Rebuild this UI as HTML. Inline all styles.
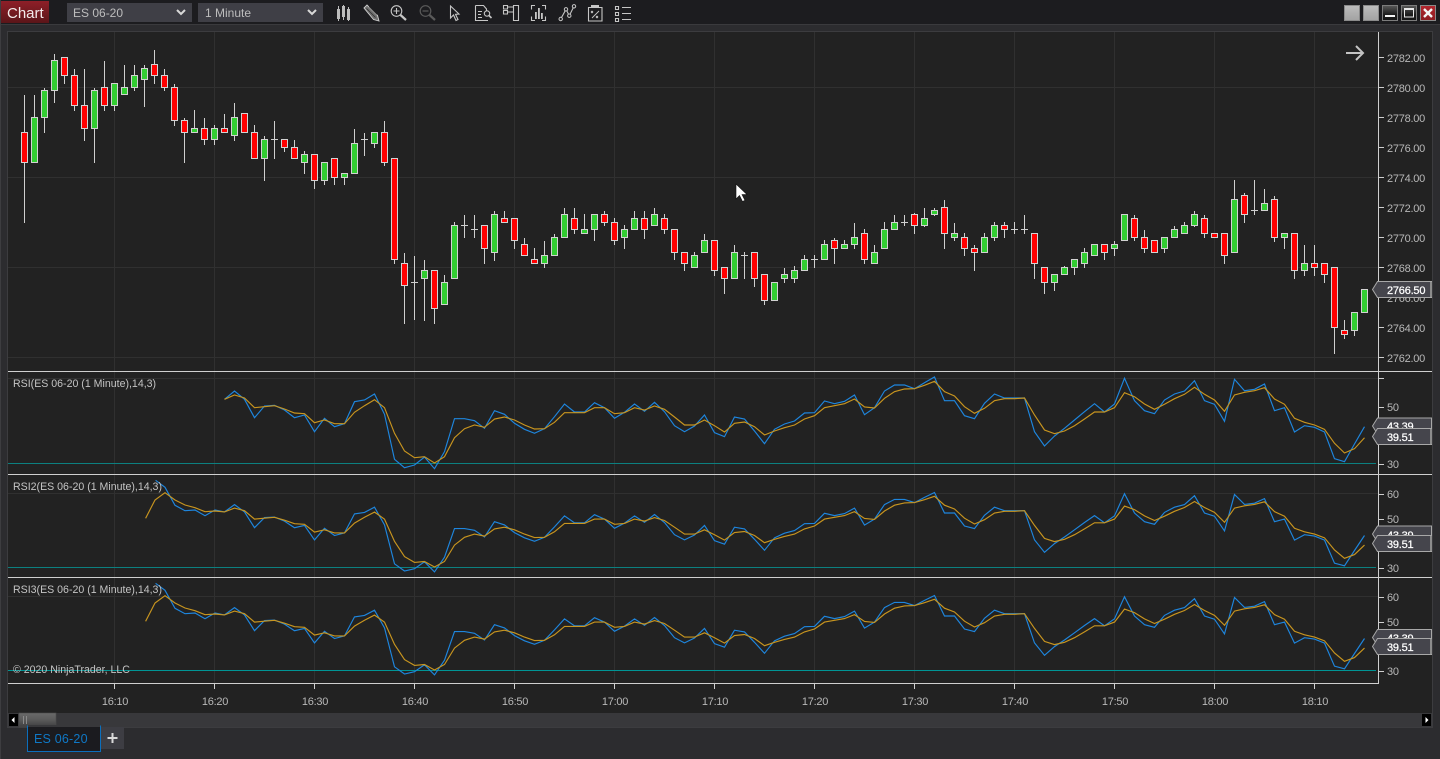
<!DOCTYPE html>
<html><head><meta charset="utf-8"><style>
html,body{margin:0;padding:0;background:#2c2c2f;width:1440px;height:759px;overflow:hidden}
svg{display:block}
text{font-family:"Liberation Sans",Arial,sans-serif}
.p{font-size:11px;fill:#b8b8b8;letter-spacing:-.25px}
.t{font-size:11px;fill:#b8b8b8;text-anchor:middle;letter-spacing:-.25px}
.l{font-size:10.6px;fill:#c4c4c4}
.w{font-size:11px;fill:#fff;stroke:#fff;stroke-width:.25;letter-spacing:-.22px}
.ic{fill:none;stroke:#c6c6c6;stroke-width:1.1}
</style></head><body>
<svg xmlns="http://www.w3.org/2000/svg" width="1440" height="759" viewBox="0 0 1440 759">
<defs>
<linearGradient id="rd" x1="0" y1="0" x2="0" y2="1"><stop offset="0" stop-color="#8e1f28"/><stop offset="1" stop-color="#5b1519"/></linearGradient>
<linearGradient id="gb" x1="0" y1="0" x2="0" y2="1"><stop offset="0" stop-color="#bdbdbd"/><stop offset="1" stop-color="#a2a2a2"/></linearGradient>
<linearGradient id="db" x1="0" y1="0" x2="0" y2="1"><stop offset="0" stop-color="#5a5a5a"/><stop offset=".6" stop-color="#1c1c1c"/><stop offset="1" stop-color="#151515"/></linearGradient>
<linearGradient id="th" x1="0" y1="0" x2="0" y2="1"><stop offset="0" stop-color="#6a6a6a"/><stop offset=".5" stop-color="#5a5a5a"/><stop offset="1" stop-color="#3e3e40"/></linearGradient>
<linearGradient id="xb" x1="0" y1="0" x2="0" y2="1"><stop offset="0" stop-color="#b3272e"/><stop offset="1" stop-color="#8b1a20"/></linearGradient>
</defs>

<!-- window -->
<rect width="1440" height="759" fill="#2c2c2f"/>
<rect x="0" y="0" width="1440" height="24" fill="#1c1c1f"/>
<rect x="0" y="24" width="1440" height="1" fill="#3a3a3d"/>
<rect x="0" y="0" width="1" height="759" fill="#3d3d40"/>
<rect x="1" y="1" width="48" height="22" fill="url(#rd)"/>
<text x="7" y="18" font-size="15" fill="#f2eaea">Chart</text>
<rect x="67" y="3" width="125" height="19" fill="#3f3f46"/>
<text x="73" y="17" font-size="12" fill="#bdbdbd">ES 06-20</text>
<path d="M177 10l4 4 4-4" fill="none" stroke="#d8d8d8" stroke-width="2"/>
<rect x="198" y="3" width="125" height="19" fill="#3f3f46"/>
<text x="205" y="17" font-size="12" fill="#bdbdbd">1 Minute</text>
<path d="M308 10l4 4 4-4" fill="none" stroke="#d8d8d8" stroke-width="2"/>

<!-- toolbar icons -->
<g fill="#bdbdbd"><rect x="338" y="6" width="1" height="15"/><rect x="337" y="9" width="3" height="10"/><rect x="343" y="5" width="1" height="15"/><rect x="342" y="6" width="3" height="11"/><rect x="348" y="7" width="1" height="14"/><rect x="347" y="9" width="3" height="11"/></g>
<path d="M364 8l3-3 10.500 10.500 1.500 5.500-5.500-1.500z" fill="#6e6e6e" stroke="#d0d0d0" stroke-width=".9"/><path d="M366.500 8.500l9 9M369 6.500l8 8" stroke="#2a2a2a" stroke-width=".7"/>
<circle cx="396.500" cy="11" r="5.300" class="ic"/><path d="M393.500 11h6M396.500 8v6" class="ic"/><path d="M400.500 15l5.500 5" stroke="#c6c6c6" stroke-width="2.200" fill="none"/>
<circle cx="425.500" cy="11" r="5.300" fill="none" stroke="#5a5a5a" stroke-width="1.200"/><path d="M422.500 11h6" stroke="#5a5a5a" stroke-width="1.200"/><path d="M429.500 15l5.500 5" stroke="#5a5a5a" stroke-width="2.200" fill="none"/>
<path d="M450.500 6v12l3-3 2.500 5.500 2-1-2.500-5.200 3.500-.3z" class="ic"/>
<path d="M475.500 5.500h8l3 3.500V11M475.500 5.500V20.500H488" class="ic"/><path d="M478 11.500h4M478 14.500h3M478 17.500h4" class="ic" stroke-width="1"/><circle cx="487" cy="13.500" r="2.700" class="ic"/><path d="M489 15.500l2.500 2.500" stroke="#c6c6c6" stroke-width="1.600"/>
<path d="M503.500 5.500h4v3.500h-4zM503.500 10.500h4v3.500h-4zM513.500 5.500h5v15h-5zM507.500 7h6M507.500 12h6" class="ic"/>
<path d="M535 5.500h-3.500v4M542 5.500h3.500v4M535 20.500h-3.500v-4M542 20.500h3.500v-4" class="ic"/><path d="M535 12h1.800v7H535zM538 8h1.800v11H538zM541 13h1.800v6H541z" fill="#c6c6c6"/>
<path d="M560.700 19L566 9.300l3.300 6.400L574 6.300" class="ic"/><circle cx="560.700" cy="19" r="1.700" fill="#1c1c1f" stroke="#c6c6c6"/><circle cx="566" cy="9.300" r="1.700" fill="#1c1c1f" stroke="#c6c6c6"/><circle cx="569.300" cy="15.700" r="1.700" fill="#1c1c1f" stroke="#c6c6c6"/><circle cx="574" cy="6.300" r="1.700" fill="#1c1c1f" stroke="#c6c6c6"/>
<path d="M588.500 7.500h13.500v13.500h-13.500z" class="ic"/><rect x="591" y="5" width="8" height="2.500" fill="#c6c6c6"/><path d="M591 11l2 2M593 11l-2 2M596 16l2 2M598 16l-2 2M592 18l7-7" stroke="#c6c6c6" stroke-width=".9" fill="none"/>
<path d="M615.500 6.500h3v3h-3zM615.500 12.500h3v3h-3zM615.500 18.500h3v3h-3zM622 7.500h9M622 13.500h9M622 19.500h9" class="ic"/>

<!-- window buttons -->
<rect x="1344.500" y="5.500" width="15" height="15" fill="url(#gb)" stroke="#8a8a8a"/>
<rect x="1363.500" y="5.500" width="15" height="15" fill="url(#gb)" stroke="#8a8a8a"/>
<rect x="1382.500" y="5.500" width="15" height="15" fill="url(#db)" stroke="#7c7c7c"/><rect x="1385" y="15" width="10" height="2" fill="#f4f4f4"/>
<rect x="1401.500" y="5.500" width="15" height="15" fill="url(#db)" stroke="#7c7c7c"/><path d="M1404.500 8.500h9v8.500h-9z" fill="none" stroke="#e8e8e8"/><rect x="1404" y="8" width="10" height="2" fill="#e8e8e8"/>
<rect x="1420.500" y="5.500" width="15" height="15" fill="url(#xb)" stroke="#8a8a8a"/><path d="M1424 9l8 8M1432 9l-8 8" stroke="#f4f4f4" stroke-width="2.400"/>

<!-- chart panel -->
<rect x="7.500" y="31.500" width="1425" height="696" fill="#222" stroke="#3c3c3f"/>
<!-- grid -->
<g stroke="#303030" fill="none" id="grid">
<path d="M8 87.500H1378M8 177.500H1378M8 267.500H1378M8 357.500H1378M8 378.500H1378M8 493.500H1378M8 596.500H1378"/>
<path d="M114.500 32V683M214.500 32V683M314.500 32V683M414.500 32V683M514.500 32V683M614.500 32V683M714.500 32V683M814.500 32V683M914.500 32V683M1014.500 32V683M1114.500 32V683M1214.500 32V683M1314.500 32V683"/>
</g>
<!-- teal levels -->
<path d="M8 463.500H1376M8 567.500H1376" stroke="#0c8080" fill="none"/>
<path d="M8 670.500H1376" stroke="#009595" fill="none"/>
<g id="plot"></g>
<!-- separators and axis -->
<path d="M8 371.500H1432M8 474.500H1432M8 577.500H1432M8 683.500H1378.500M1378.500 32V684" stroke="#cfcfcf" fill="none"/>
<!-- ticks -->
<path stroke="#cfcfcf" fill="none" d="M1378 57.500h6M1378 87.500h6M1378 117.500h6M1378 147.500h6M1378 177.500h6M1378 207.500h6M1378 237.500h6M1378 267.500h6M1378 297.500h6M1378 327.500h6M1378 357.500h6M1378 378.500h6M1378 407.500h6M1378 464.500h6M1378 494.500h6M1378 519.500h6M1378 568.500h6M1378 597.500h6M1378 622.500h6M1378 671.500h6M114.500 684v5M214.500 684v5M314.500 684v5M414.500 684v5M514.500 684v5M614.500 684v5M714.500 684v5M814.500 684v5M914.500 684v5M1014.500 684v5M1114.500 684v5M1214.500 684v5M1314.500 684v5"/>
<!-- price labels -->
<text class="p" x="1387" y="62">2782.00</text><text class="p" x="1387" y="92">2780.00</text><text class="p" x="1387" y="122">2778.00</text><text class="p" x="1387" y="152">2776.00</text><text class="p" x="1387" y="182">2774.00</text><text class="p" x="1387" y="212">2772.00</text><text class="p" x="1387" y="242">2770.00</text><text class="p" x="1387" y="272">2768.00</text><text class="p" x="1387" y="302">2766.00</text><text class="p" x="1387" y="332">2764.00</text><text class="p" x="1387" y="362">2762.00</text>
<text class="p" x="1387" y="411">50</text><text class="p" x="1387" y="468">30</text>
<text class="p" x="1387" y="498">60</text><text class="p" x="1387" y="523">50</text><text class="p" x="1387" y="572">30</text>
<text class="p" x="1387" y="601">60</text><text class="p" x="1387" y="626">50</text><text class="p" x="1387" y="675">30</text>
<!-- tags -->
<g fill="#45454c" stroke="#a8a8a8">
<path d="M1372.500 289.500l5-8H1431.500v16H1377.500z"/>
<path d="M1372.500 426l5-8H1431.500v16H1377.500z"/>
<path d="M1372.500 534l5-8H1431.500v16H1377.500z"/>
<path d="M1372.500 637.500l5-8H1431.500v16H1377.500z"/>
</g>
<rect x="1430" y="282" width="2" height="15" fill="#8c8c8c"/>
<text class="w" x="1387" y="294">2766.50</text>
<text class="w" x="1387" y="430">43.39</text>
<path d="M1372.500 436.500l5-8H1431.500v16H1377.500z" fill="#45454c" stroke="#a8a8a8"/><rect x="1430" y="429" width="2" height="15" fill="#8c8c8c"/>
<text class="w" x="1387" y="441">39.51</text>
<text class="w" x="1387" y="539">43.39</text>
<path d="M1372.500 543.500l5-8H1431.500v16H1377.500z" fill="#45454c" stroke="#a8a8a8"/><rect x="1430" y="536" width="2" height="15" fill="#8c8c8c"/>
<text class="w" x="1387" y="548">39.51</text>
<text class="w" x="1387" y="642">43.39</text>
<path d="M1372.500 646.500l5-8H1431.500v16H1377.500z" fill="#45454c" stroke="#a8a8a8"/><rect x="1430" y="639" width="2" height="15" fill="#8c8c8c"/>
<text class="w" x="1387" y="651">39.51</text>
<!-- panel labels -->
<text class="l" x="13" y="387">RSI(ES 06-20 (1 Minute),14,3)</text>
<text class="l" x="13" y="490">RSI2(ES 06-20 (1 Minute),14,3)</text>
<text class="l" x="13" y="593">RSI3(ES 06-20 (1 Minute),14,3)</text>
<text class="l" x="13" y="673">© 2020 NinjaTrader, LLC</text>
<!-- time labels -->
<text class="t" x="115" y="705">16:10</text><text class="t" x="215" y="705">16:20</text><text class="t" x="315" y="705">16:30</text><text class="t" x="415" y="705">16:40</text><text class="t" x="515" y="705">16:50</text><text class="t" x="615" y="705">17:00</text><text class="t" x="715" y="705">17:10</text><text class="t" x="815" y="705">17:20</text><text class="t" x="915" y="705">17:30</text><text class="t" x="1015" y="705">17:40</text><text class="t" x="1115" y="705">17:50</text><text class="t" x="1215" y="705">18:00</text><text class="t" x="1315" y="705">18:10</text>
<!-- arrow -->
<path d="M1346 53h17M1356 46l7 7-7 7" fill="none" stroke="#c4c4c4" stroke-width="2"/>
<!-- mouse cursor -->
<path d="M736 184v15l3.500-3.500 3 6 2.500-1.200-3-5.800h5z" fill="#fff" stroke="#111" stroke-width=".6"/>
<!-- scrollbar -->
<rect x="8" y="713" width="1424" height="14" fill="#38383b"/>
<rect x="9" y="714" width="9" height="12" fill="#000"/><path d="M11.500 720l3-3v6z" fill="#fff"/>
<rect x="19" y="713" width="37" height="14" fill="url(#th)" stroke="#4c4c4c" stroke-width=".6"/><path d="M23.500 716v8M26.500 716v8" stroke="#8a8a8a"/>
<rect x="1422" y="714" width="9" height="12" fill="#000"/><path d="M1428.500 720l-3-3v6z" fill="#fff"/>
<!-- tab -->
<rect x="27.500" y="726" width="73" height="25.500" fill="#1b1b1f" stroke="#0b6fbd"/>
<rect x="28" y="725" width="72" height="2" fill="#38383b"/>
<text x="34" y="743" font-size="12.500" fill="#0f78c6" letter-spacing=".2">ES 06-20</text>
<rect x="101" y="727" width="23" height="22" fill="#3d3d43"/>
<path d="M107.500 738h10M112.500 733v10" stroke="#d8d8d8" stroke-width="2"/>
</svg>
<script>
var NS="http://www.w3.org/2000/svg",plot=document.getElementById("plot");
function add(tag,a){var e=document.createElementNS(NS,tag);for(var k in a)e.setAttribute(k,a[k]);plot.appendChild(e);}
// wickTop, bodyTop, bodyBot, wickBot, color
var A=[[95,132.3,162.7,222.7,'r'],[95,117.3,162.7,162.7,'g'],[88.3,90.3,117.3,132.7,'g'],[54,60.3,90.3,102.7,'g'],[57.3,57.3,75.3,83.7,'r'],[69,75.3,105.3,110,'r'],[69,105.3,128.3,140,'r'],[88.3,90.3,128.3,162.7,'g'],[61,87.3,105.3,110,'r'],[83.3,83.3,105.3,110,'g'],[65,87.3,94.3,94.3,'g'],[65,75.3,87.3,90.7,'g'],[65,68.3,79.3,106,'g'],[50,64.3,75.3,83.7,'r'],[69,75.3,87.3,90.7,'r'],[84.3,87.3,120.3,125,'r'],[118.3,120.3,132.3,162.7,'r'],[110,128.3,132.3,132.3,'g'],[118.3,128.3,139.3,144,'r'],[125,128.3,139.3,144,'g'],[114,128.3,132.3,132.3,'r']];
// zoom coords y=90+z/3 : wt bt bb wb
var B=("g40 82 136 150,r70 70 127 127,r105 127 205 205,g138 148 205 272,d93 148 148 205,r148 148 172 183,r150 172 205 205,g183 193 217 250,r193 193 271 296,g217 217 271 284,r205 205 262 284,g250 250 262 284,g118 160 250 250,d130 148 148 195,g127 127 160 172,r93 127 217 227,r205 205 508 520,r490 520 586 700,d498 577 577 688,g510 541 565 690,r541 541 655 700,g555 577 643 643,g397 406 565 565,d375 406 406 442,d375 418 418 442,r406 406 475 520,g363 373 487 510,r363 385 397 397,r385 385 451 475,r445 463 497 497,r476 508 520 520,g453 496 520 532,g432 442 497 497,g354 373 442 442,r354 385 418 430,g373 418 430 430,g373 373 418 452,r363 373 397 406,r385 397 451 463,g406 418 442 475,g363 385 418 418,r363 385 418 445,g354 373 406 407,r373 385 418 430,r418 418 487 508,r487 487 520 542,g487 496 532 532,g432 451 487 487,r451 451 541 555,r532 532 565 610,g465 487 565 565,d487 496 496 565,r487 487 565 588,r553 553 632 643,g576 577 632 632,g535 553 565 577,g530 541 565 577,g497 508 541 541,d497 508 508 532,g451 463 508 508,r445 451 475 520,g451 463 475 475,g400 441 463 475,r418 430 508 520,g465 487 520 520,g397 418 475 475,g375 397 418 418,d375 397 397 407,r370 373 406 430,g355 385 406 408,g355 361 373 375,r330 351 430 476,g400 430 442 451,r430 442 475 497,r465 475 487 542,g430 441 487 487,g397 406 442 451,r397 406 418 442,d397 418 418 430,d375 418 418 430,r430 430 520 565,r532 532 577 610,g553 553 577 600,g530 532 553 554,g510 508 532 553,g476 487 520 532,g463 463 497 497,r463 463 487 508,g453 463 475 497,g373 373 451 451,r375 385 442 451,r420 442 475 487,r451 451 487 487,g441 442 475 487,g408 418 442 442,g397 406 430 430,g363 373 406 408,r375 385 430 442,r430 430 442 442,r430 430 496 520,g272 328 487 487,r310 316 373 397,d272 361 361 373,g298 340 361 361,r318 328 442 453,g430 430 442 476,r430 430 541 565,g465 520 541 555,r465 520 532 555,r520 520 553 578,r532 532 712 790,r690 721 733 745,g667 667 721 735,g598 598 667 667").split(",");
var bars=A.slice();
B.forEach(function(s){var t=s[0],n=s.slice(1).split(" ").map(function(v){return 90+v/3});bars.push([n[0],n[1],n[2],n[3],t]);});
function snap(v){return Math.floor(v)+.5}
bars.forEach(function(b,i){
 var x=24.5+10*i,wt=snap(b[0]),bt=snap(b[1]),bb=snap(b[2]),wb=snap(b[3]);
 add("path",{d:"M"+x+" "+(wt-.5)+"V"+(wb+.5),stroke:"#cfcfcf",fill:"none","shape-rendering":"crispEdges"});
 if(b[4]=="d"){add("path",{d:"M"+(x-3.5)+" "+bt+"H"+(x+3.5),stroke:"#cfcfcf","shape-rendering":"crispEdges"});}
 else add("rect",{x:x-3,y:bt,width:6,height:Math.max(bb-bt,1),fill:b[4]=="r"?"#ff0000":"#32cd32",stroke:"#d2d2d2","shape-rendering":"crispEdges"});
});
// RSI values in zoom coords y=370+z/3
var blue=[88,63,88,143,108,106,120,143,135,185,145,170,161,95,90,72,133,268,293,285,261,296,245,146,146,152,175,122,133,160,178,190,176,140,102,126,126,98,113,145,127,102,124,97,125,167,185,168,135,188,200,141,147,183,221,178,162,153,129,128,93,101,94,75,134,113,63,45,45,56,38,21,92,92,137,146,100,72,84,84,84,185,228,198,175,150,125,101,126,102,25,92,122,131,90,72,63,32,92,103,154,28,62,58,42,122,113,186,167,172,186,266,275,222,170];
var gold=[88,75,84,113,110,107,117,129,131,158,150,161,161,127,107,89,113,190,243,263,260,279,260,203,176,165,172,147,141,150,165,177,176,157,128,128,128,113,113,131,128,113,120,108,118,141,165,165,150,167,186,160,156,170,195,183,173,165,147,137,113,107,101,87,111,114,85,65,57,56,46,34,65,78,110,130,115,92,86,86,84,135,180,191,183,167,147,126,126,113,68,80,102,118,103,86,73,52,73,90,124,75,67,62,53,87,103,145,157,165,178,220,249,236,203];
// extra leading points panel 2/3 (zoom coords of panel 2)
var b2=[[155.6,331],[165,352],[175,406],[185,422],[195,420],[205,437],[215,420]];
var g2=[[145.6,445],[155,390],[165,368],[175,390],[185,405],[195,413],[205,425],[215,423]];
function line(pts,c){add("polyline",{points:pts.map(function(p){return p[0]+","+p[1].toFixed(1)}).join(" "),fill:"none",stroke:c,"stroke-width":1.15,"stroke-linejoin":"miter"});}
var BC="#1e86de",GC="#c8951f";
function series(arr){return arr.map(function(z,k){return [224.5+10*k,370+z/3]});}
function map2(y1,off){return 518.5+(y1-407)*.866+off;}
function panel(off){
 line(b2.map(function(p){return [p[0],370+p[1]/3+off]}).concat(series(blue).map(function(p){return [p[0],map2(p[1],off)]})),BC);
 line(g2.map(function(p){return [p[0],370+p[1]/3+off]}).concat(series(gold).map(function(p){return [p[0],map2(p[1],off)]})),GC);
}
line(series(blue),BC);line(series(gold),GC);
panel(0);panel(103);
</script>
</body></html>
